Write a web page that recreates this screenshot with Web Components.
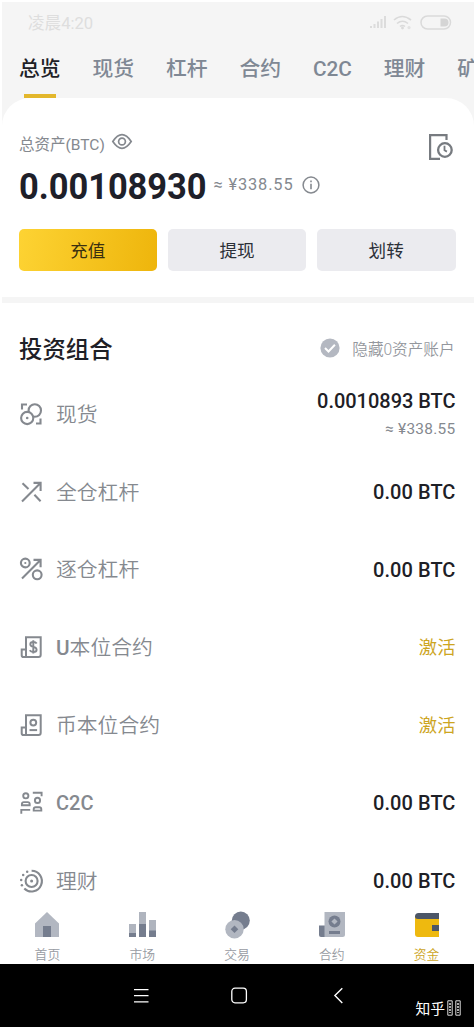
<!DOCTYPE html>
<html lang="zh-CN"><head><meta charset="utf-8"><title>资金</title>
<style>html,body{margin:0;background:#fff;overflow:hidden}body{width:474px;height:1027px}</style></head>
<body><wallet-app></wallet-app>
<script>
const FONT = 'Roboto,"Noto Sans CJK SC",sans-serif';
const define = (name, html) => customElements.define(name, class extends HTMLElement {
  constructor() {
    super();
    const t = document.createElement('template');
    t.innerHTML = typeof html === 'function' ? html(this) : html;
    this.attachShadow({mode: 'open'}).append(t.content.cloneNode(true));
  }
});
const ICONS = {
  spot: [24,24,'<g fill="none" stroke="#85898f" stroke-width="2.1"><path d="M3 7.5V2.5h5M17 21.5h4.5v-5"/><circle cx="15.8" cy="8.5" r="6.2" fill="#fff"/><circle cx="8.2" cy="16" r="6.1" fill="#fff"/></g><circle cx="8.2" cy="16" r="1.3" fill="#85898f"/>'],
  cross: [24,24,'<g fill="none" stroke="#85898f" stroke-width="2.1"><path d="M3 21.5 21 3.5M14.5 2.9H21.6v8M3.5 3.2l6 5.8M15.4 14.8l6.2 6.4"/></g>'],
  isolated: [24,24,'<g fill="none" stroke="#85898f" stroke-width="2.1"><path d="M3 21.5 21 3.5M14.5 2.9h7.1v7.3"/><circle cx="6.3" cy="6" r="4.4"/><circle cx="18.2" cy="17.8" r="4.4"/></g><circle cx="6.3" cy="6" r="1.1" fill="#85898f"/>'],
  usd: [24,24,'<g fill="none" stroke="#85898f" stroke-width="2"><path d="M7 22V2.3h14.7v17.5q0 2.2-2.2 2.2H4.5Q2.7 22 2.7 20.2V14.5H7"/><path d="M17.7 8.6q-1-1.6-3.4-1.6-3 0-3 2.3 0 2 3 2.6 3.3.6 3.3 2.8 0 2.3-3.2 2.3-2.6 0-3.7-1.7M14.3 5.2v13.4" stroke-width="1.9"/></g>'],
  coin: [24,24,'<g fill="none" stroke="#85898f" stroke-width="2"><path d="M7 22V2.3h14.7v17.5q0 2.2-2.2 2.2H4.5Q2.7 22 2.7 20.2V14.5H7"/><circle cx="14.3" cy="9.6" r="2.9"/><path d="M10.5 17.1h7.6"/></g>'],
  people: [24,24,'<g fill="none" stroke="#85898f" stroke-width="1.9"><circle cx="6.8" cy="4.8" r="2.6"/><path d="M2.9 14.3v-1.2q0-2 2-2h3.8q2 0 2 2v1.2z"/><circle cx="18.5" cy="9.4" r="2.6"/><path d="M14.7 19.6v-1.4q0-2 2-2h3.6q2 0 2 2v1.4z"/><path d="M13.8 1.7H22.6V5.2M11.2 18.9H2.3v3.9"/></g>'],
  earn: [24,24,'<g fill="none" stroke="#85898f" stroke-width="2.1"><path d="M12.6 1.8a10.3 10.3 0 1 1-7.3 17.6"/><circle cx="12.6" cy="12" r="6"/></g><g fill="#85898f"><circle cx="12.6" cy="12" r="1.5"/><circle cx="8.2" cy="2.8" r="1.25"/><circle cx="4.2" cy="6" r="1.25"/><circle cx="2.2" cy="11" r="1.25"/><circle cx="2.9" cy="16.2" r="1.25"/></g>'],
  eye: [20,15,'<g fill="none" stroke="#85898f" stroke-width="1.7"><path d="M.8 7.5Q5.4.7 10 .7t9.2 6.8q-4.6 6.8-9.2 6.8T.8 7.5z"/><circle cx="10" cy="7.5" r="3.4"/></g>'],
  info: [18,18,'<circle cx="9" cy="9" r="7.9" fill="none" stroke="#85898f" stroke-width="1.5"/><path d="M9 7.8v5.5M9 4.5v1.7" stroke="#85898f" stroke-width="1.6"/>'],
  history: [26,28,'<g fill="none" stroke="#777b80" stroke-width="2.2"><path d="M18.5 7V2.1H2.1v23.8H12"/><circle cx="16.9" cy="17" r="6.8" fill="#fff" stroke-width="2.3"/><path d="M16.5 12.8v4.4l2.4 1.4" stroke-width="1.8"/></g>'],
  check: [20,20,'<circle cx="10" cy="10" r="9.6" fill="#b4b8c1"/><path d="m5 10 3.5 3.5 6.4-6.8" fill="none" stroke="#fff" stroke-width="2"/>'],
  home: [26,28,'<path d="M1 12.6 13 1l12 11.6V26H1z" fill="#b2b7c1"/><path d="M9 15h8v11H9z" fill="#757d8e"/>'],
  market: [28,28,'<path d="M1 13h7v9H1zM11 1h7v12h-7zM21 9h7v11h-7z" fill="#afb4be"/><path d="M1 22h7v4H1zM11 13h7v13h-7zM21 19.5h7V26h-7z" fill="#757d8e"/>'],
  trade: [26,28,'<circle cx="16.8" cy="9.6" r="9" fill="#757d8e"/><circle cx="10.5" cy="18.2" r="9.2" fill="#b2b7c1"/><path d="m10.5 14.4 3.8 3.8-3.8 3.8-3.8-3.8z" fill="#757d8e"/>'],
  futures: [28,28,'<path d="M1 14.5h6V26H3q-2 0-2-2z" fill="#757d8e"/><path d="M6.5 1H27v22.5q0 2.5-2.5 2.5h-18z" fill="#b2b7c1"/><circle cx="16.5" cy="10.5" r="6" fill="#757d8e"/><path d="m16.5 7.4 3.1 3.1-3.1 3.1-3.1-3.1z" fill="#b2b7c1"/><path d="M11 20h11v3H11z" fill="#757d8e"/>'],
  wallet: [26,28,'<path d="M1 5h24v21H4q-3 0-3-3z" fill="#eeb90f"/><path d="M4.5 2H25v6H4Q1 8 1 5.5 1 2 4.5 2z" fill="#4c5667"/><path d="M18 14h7v6h-7z" fill="#4c5667"/>'],
  signal: [16,14,'<g fill="#dcdcdc"><path d="M0 11h2v2H0zM3.5 9h2v4h-2zM7 6.5h2V13H7zM10.5 4h2v9h-2zM14 1h2v12h-2z"/></g>'],
  wifi: [20,15,'<g fill="none" stroke="#dadada" stroke-width="1.6"><path d="M1 5q8-7 17 0M4 8.5q5.5-4.5 11 0M7 11.5q2.5-2 5 0"/></g><circle cx="9.5" cy="13" r="1.4" fill="#dadada"/><circle cx="16" cy="12.6" r="1.6" fill="#e2e2e2"/>'],
  battery: [32,15,'<rect x="1" y="1" width="29.5" height="13" rx="6.5" fill="none" stroke="#dadada" stroke-width="1.5"/><path d="M20.5 3.5h4a4 4 0 0 1 0 8h-4z" fill="#d5d5d5"/>'],
  menu: [16,16,'<path d="M1 1.6h14.5M1 7.7h14.5M1 13.8h14.5" stroke="#fff" stroke-width="1.3"/>'],
  square: [16,16,'<rect x=".8" y=".2" width="14.6" height="14.6" rx="3.2" fill="none" stroke="#fff" stroke-width="1.3"/>'],
  back: [10,16,'<path d="M9.3.2 1.9 7.6 9.3 15" fill="none" stroke="#fff" stroke-width="1.4"/>'],
  missing: [14,17,'<g fill="none" stroke="#ddd"><path d="M.8.8h4.4v14.4H.8zM8.8.8h4.4v14.4H8.8z"/><path d="M3 3v10M11 3v10" stroke="#aaa" stroke-width="2" stroke-dasharray="2 1"/></g>']
};
define('ui-icon', el => { const [w,h,s] = ICONS[el.getAttribute('name')];
  return `<style>:host{display:block;flex:none;width:${w}px;height:${h}px}svg{display:block;overflow:visible}</style><svg width="${w}" height="${h}" viewBox="0 0 ${w} ${h}">${s}</svg>`; });
define('status-bar', `<style>:host{display:flex;height:44px;align-items:center;padding:0 22.5px 4px 26px;color:#dedede;font-size:16.6px;box-sizing:border-box}span{flex:1}ui-icon+ui-icon{margin-left:7px}</style>
<span>凌晨4:20</span><ui-icon name="signal"></ui-icon><ui-icon name="wifi"></ui-icon><ui-icon name="battery"></ui-icon>`);
define('top-tab', el => `<style>:host{display:flex;flex-direction:column;align-items:center;flex:none;font-size:20.8px;line-height:30px;font-weight:500;color:#7f8894}
:host([active]){color:#1e2026}i{width:32px;height:4px;margin-top:10px;background:#e3b72c}</style><slot></slot>${el.hasAttribute('active')?'<i></i>':''}`);
define('top-tabs', `<style>:host{display:flex;gap:31.9px;padding:8px 0 0 17px;height:52px;box-sizing:border-box;overflow:hidden}</style><slot></slot>`);
define('action-button', `<style>:host{flex:1;height:42px;border-radius:5px;background:#ebebef;display:flex;align-items:center;justify-content:center;font-size:17.6px;color:#2b3038}:host([primary]){background:linear-gradient(100deg,#fdd333,#eeb50c);color:#3a3010}</style><slot></slot>`);
define('balance-card', `<style>:host{display:block;height:199px;box-sizing:border-box;background:#fff;border-radius:28px 28px 0 0;padding:31px 18.5px 0 17px;color:#85898f}
.t,.b,.a{display:flex;align-items:center}.t{height:28px;font-size:15.5px}.t ui-icon{margin-left:7px}.t .h{margin-left:auto;margin-top:7px;margin-right:1.5px}.t .e{margin-top:-3px}
.b{height:46px;margin-top:6px;font-size:16.4px}.b b{font-size:37.4px;line-height:46px;font-weight:700;color:#1e2029;width:188px;margin-right:6.5px;white-space:nowrap}.b b span{display:inline-block;transform:scaleX(.922);transform-origin:0 50%;margin:0;letter-spacing:-.05px}.b ui-icon{margin-left:7.5px;margin-top:-3px}.b>span{flex:none;width:82px;margin-top:-3px;white-space:nowrap;letter-spacing:.85px;margin-right:-1px}
.a{gap:10.5px;margin-top:19.5px;margin-left:-.5px}</style>
<div class="t"><span>总资产(BTC)</span><ui-icon class="e" name="eye"></ui-icon><ui-icon class="h" name="history"></ui-icon></div>
<div class="b"><b><span>0.00108930</span></b><span>≈ ¥338.55</span><ui-icon name="info"></ui-icon></div>
<div class="a"><action-button primary>充值</action-button><action-button>提现</action-button><action-button>划转</action-button></div>`);
define('section-head', `<style>:host{display:flex;align-items:center;height:71px;padding:19px 19.5px 0 19px;box-sizing:border-box}b{flex:1;font-size:23.4px;font-weight:500;color:#1e2026}span{font-size:15.6px;font-weight:350;color:#94979d;margin-left:12.5px}</style><b>投资组合</b><ui-icon name="check"></ui-icon><span>隐藏0资产账户</span>`);
define('asset-row', el => `<style>:host{display:flex;align-items:center;height:77.8px;padding:0 18.5px 0 19px;box-sizing:border-box;white-space:nowrap}
.l{flex:1;margin-left:13px;font-size:20.8px;font-weight:350;color:#85898f}.l ::slotted(b){font-weight:500}:host([latin]) .l{font-weight:500;font-size:20px;padding-top:2px}.r{padding-top:2.4px;text-align:right;font-size:20px;line-height:28px;font-weight:500;color:#1e2026;letter-spacing:.06px}:host([sub]) .r{padding-top:5px;letter-spacing:-.03px}:host([link]) .r{padding-top:3px;font-weight:400;color:#cda51f;font-size:18.3px}small{display:block;font-size:15.4px;font-weight:400;color:#85898f;letter-spacing:.3px}ui-icon{margin-top:2px}</style>
<ui-icon name="${el.getAttribute('icon')}"></ui-icon><span class="l"><slot></slot></span><div class="r">${el.getAttribute('value')}${el.hasAttribute('sub')?`<small>${el.getAttribute('sub')}</small>`:''}</div>`);
define('bottom-item', el => `<style>:host{flex:1;display:flex;flex-direction:column;align-items:center;font-size:12.8px;line-height:18px;font-weight:350;color:#979ba2}:host([active]){color:#cda51f}ui-icon{margin-bottom:7px}</style><ui-icon name="${el.getAttribute('icon')}"></ui-icon><slot></slot>`);
define('bottom-bar', `<style>:host{display:flex;height:53.5px;flex:none;background:#fff}</style><slot></slot>`);
define('system-nav', `<style>:host{display:grid;grid-template-columns:133px 98px 102px 1fr;height:63.5px;background:#000;color:#fff;align-items:center}section{display:flex;justify-content:space-between;height:63.5px;align-items:center}div{display:flex;align-items:center;align-self:flex-end;padding:0 13px 7px 0;font-size:14.8px;line-height:24px;gap:2px}</style>
<i></i><ui-icon name="menu"></ui-icon><ui-icon name="square"></ui-icon><section><ui-icon name="back"></ui-icon><div><span>知乎</span><ui-icon name="missing"></ui-icon></div></section>`);
define('wallet-app', `<style>:host{display:flex;flex-direction:column;width:474px;height:1027px;background:#fff;font-family:${FONT};overflow:hidden}
header{height:295px;flex:none;margin:2px 0 0 2px;background:#f5f5f5}hr{flex:none;margin:0 0 0 2px;height:6px;border:0;background:#f5f5f5}section-head{flex:none}main{height:536.5px;flex:none;overflow:hidden}</style>
<header><status-bar></status-bar><top-tabs><top-tab active>总览</top-tab><top-tab>现货</top-tab><top-tab>杠杆</top-tab><top-tab>合约</top-tab><top-tab>C2C</top-tab><top-tab>理财</top-tab><top-tab>矿</top-tab></top-tabs><balance-card></balance-card></header><hr><section-head></section-head>
<main><asset-row icon="spot" value="0.0010893 BTC" sub="≈ ¥338.55">现货</asset-row><asset-row icon="cross" value="0.00 BTC">全仓杠杆</asset-row><asset-row icon="isolated" value="0.00 BTC">逐仓杠杆</asset-row><asset-row icon="usd" value="激活" link><b>U</b>本位合约</asset-row><asset-row icon="coin" value="激活" link>币本位合约</asset-row><asset-row icon="people" value="0.00 BTC" latin>C2C</asset-row><asset-row icon="earn" value="0.00 BTC">理财</asset-row></main>
<bottom-bar><bottom-item icon="home">首页</bottom-item><bottom-item icon="market">市场</bottom-item><bottom-item icon="trade">交易</bottom-item><bottom-item icon="futures">合约</bottom-item><bottom-item icon="wallet" active>资金</bottom-item></bottom-bar><system-nav></system-nav>`);
</script></body></html>
